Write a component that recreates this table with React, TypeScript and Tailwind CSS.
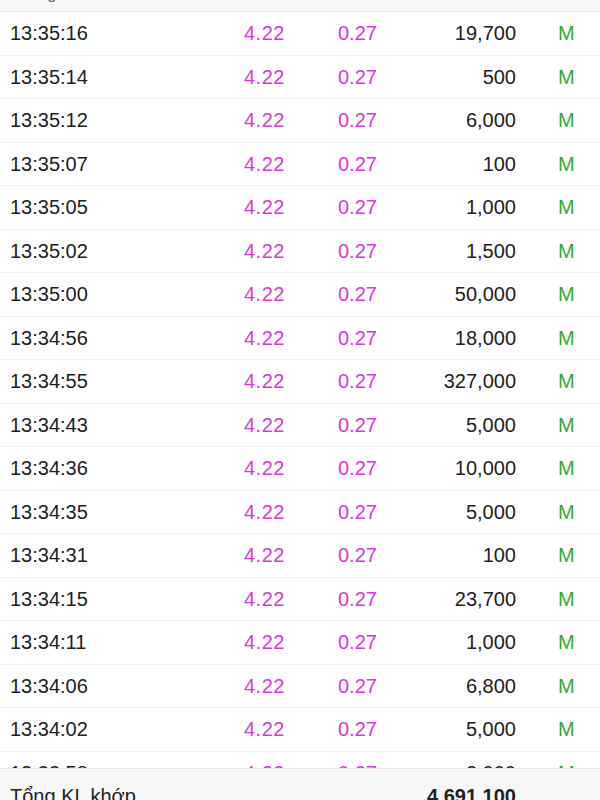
const rows: [string, string][] = [
  ["13:35:16", "19,700"],
  ["13:35:14", "500"],
  ["13:35:12", "6,000"],
  ["13:35:07", "100"],
  ["13:35:05", "1,000"],
  ["13:35:02", "1,500"],
  ["13:35:00", "50,000"],
  ["13:34:56", "18,000"],
  ["13:34:55", "327,000"],
  ["13:34:43", "5,000"],
  ["13:34:36", "10,000"],
  ["13:34:35", "5,000"],
  ["13:34:31", "100"],
  ["13:34:15", "23,700"],
  ["13:34:11", "1,000"],
  ["13:34:06", "6,800"],
  ["13:34:02", "5,000"],
  ["13:33:58", "2,000"],
];

const App = () => {
  return (
    <div className="w-[600px] h-[800px] overflow-hidden flex flex-col bg-white font-['Liberation_Sans',Arial,sans-serif] text-[20px] text-[#222]">
      {/* header, scrolled mostly out of view */}
      <div className="h-[12px] shrink-0 overflow-hidden bg-[#f7f7f7] border-b border-[#e3e3e3] px-[10px]">
        <div className="mt-[-16px] text-[16px] leading-[20px] text-[#666]">Thời gian</div>
      </div>

      {/* trade list */}
      <div className="h-[756px] shrink-0 overflow-hidden">
        {rows.map(([time, vol], i) => (
          <div
            key={i}
            className="h-[43.5px] flex items-center px-[10px] border-b border-[#efefef]"
          >
            <div className="w-[234px]">{time}</div>
            <div className="w-[94px] text-[#d63bd6] tracking-[0.5px]">4.22</div>
            <div className="w-[82px] text-[#d63bd6]">0.27</div>
            <div className="w-[96px] text-right">{vol}</div>
            <div className="ml-[42px] text-[#2fae2f]">M</div>
          </div>
        ))}
      </div>

      {/* total footer */}
      <div className="h-[60px] shrink-0 bg-[#f7f7f7] border-t border-[#e3e3e3] flex items-start pt-[13px] px-[10px] leading-[28px]">
        <div className="w-[406px]">Tổng KL khớp</div>
        <div className="w-[100px] text-right font-bold">4,691,100</div>
      </div>
    </div>
  );
};

export default App;
